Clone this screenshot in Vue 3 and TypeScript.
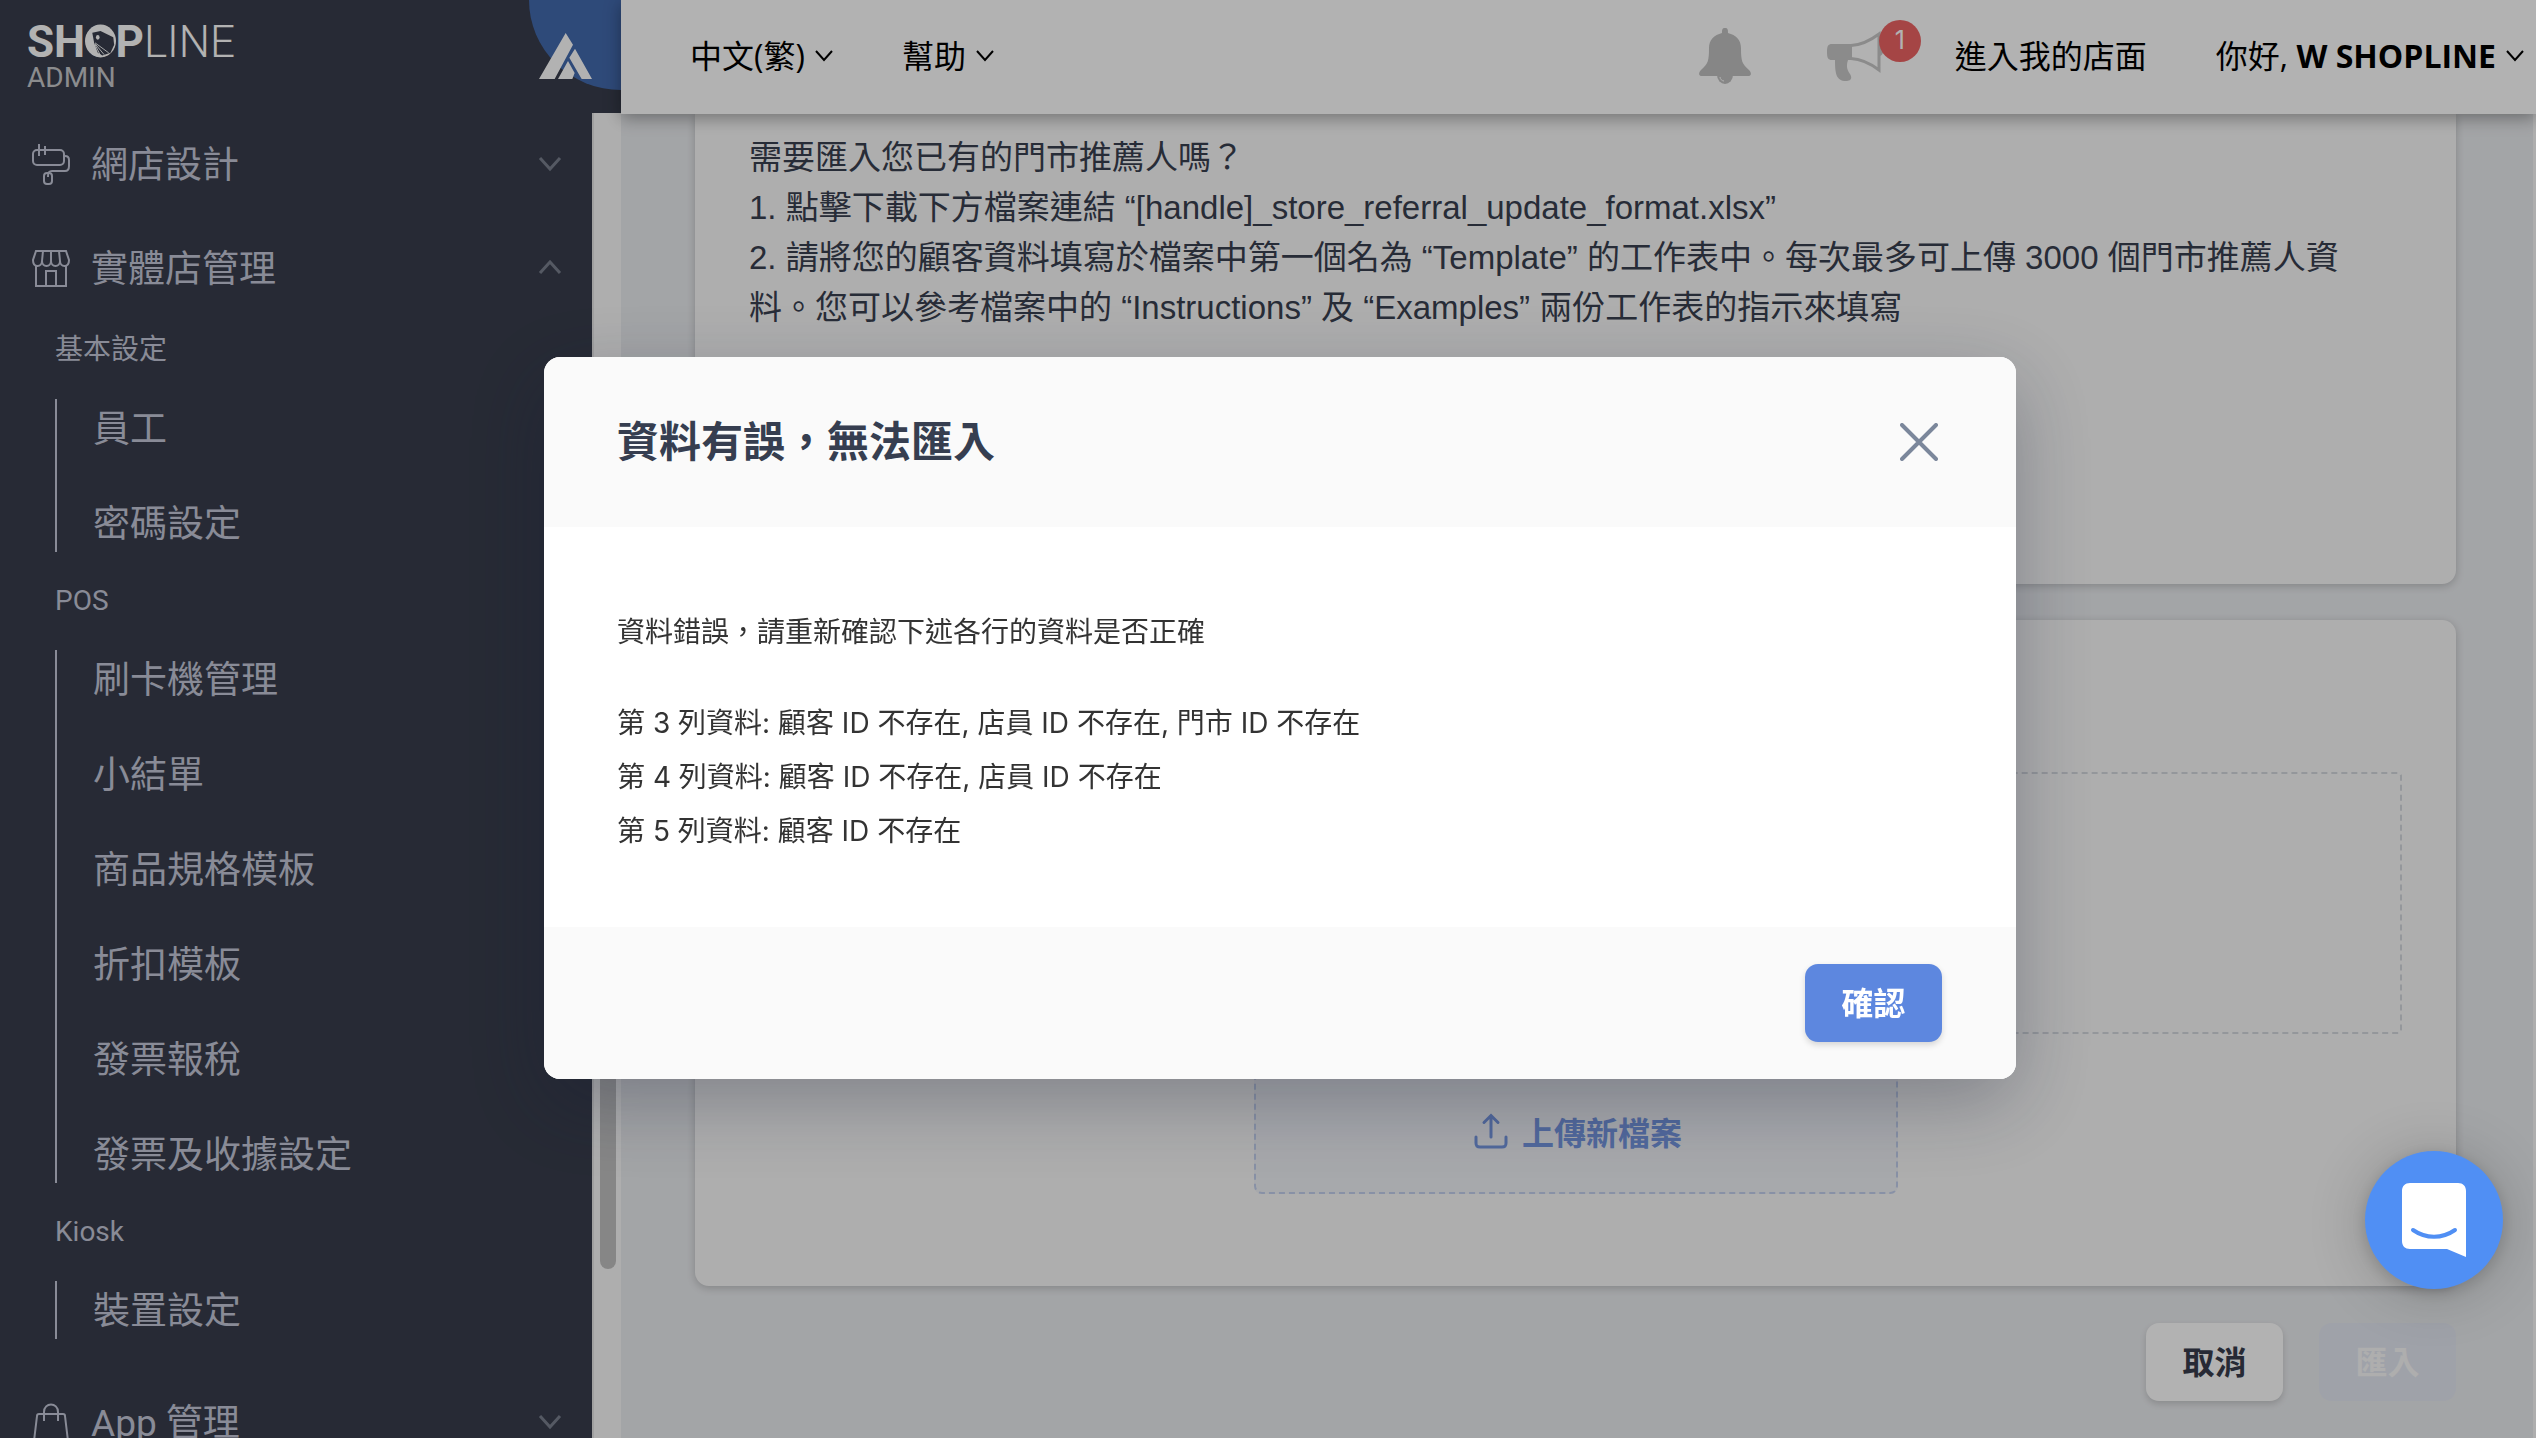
<script setup lang="ts">
import { ref } from 'vue'

interface MenuGroup {
  title: string
  items: string[]
}

const groups: MenuGroup[] = [
  { title: '基本設定', items: ['員工', '密碼設定'] },
  { title: 'POS', items: ['刷卡機管理', '小結單', '商品規格模板', '折扣模板', '發票報稅', '發票及收據設定'] },
  { title: 'Kiosk', items: ['裝置設定'] },
]

const errors: string[] = [
  '第 3 列資料: 顧客 ID 不存在, 店員 ID 不存在, 門市 ID 不存在',
  '第 4 列資料: 顧客 ID 不存在, 店員 ID 不存在',
  '第 5 列資料: 顧客 ID 不存在',
]

const storeOpen = ref(true)
const dialogOpen = ref(true)
</script>

<template>
  <div class="app">
    <aside class="sidebar">
      <div class="brand">
        <a class="logo" href="#">
          <span class="logo-name"><b>SH<span class="logo-o">O<svg viewBox="0 0 34 36" aria-hidden="true">
            <ellipse cx="17" cy="18" rx="17" ry="18" fill="#fff" />
            <path d="M8 9 17 7l14 7 1 8-4 9-9 3-5-3-4-11z" fill="#383d4c" />
            <ellipse cx="14" cy="14" rx="2" ry="2.500" fill="#fff" />
            <path d="M11 20 26 31M11 21l10 12M11 22l6 12" stroke="#fff" fill="none" />
          </svg></span>P</b>LINE</span>
          <span class="logo-sub">ADMIN</span>
        </a>
        <div class="badge">
          <svg viewBox="0 0 159 138" aria-hidden="true">
            <path d="M80 0 102 35 47 138H0zM108 47l51 91h-31L91 74zM87 84l20 36-7 18H57z" fill="#fff" />
          </svg>
        </div>
      </div>
      <div class="sidebar-body">
        <nav class="menu">
          <button class="menu-row" type="button">
            <svg class="menu-icon" viewBox="0 0 40 42" aria-hidden="true">
              <rect x="2" y="7" width="31" height="15" rx="4" />
              <path d="M8 1v12M14 3v9M33 13h1c3 0 4 1 4 4v6c0 3-1 5-4 5H21c-3 0-4 1-4 5v1" />
              <rect x="13" y="30" width="8" height="11" rx="3" />
            </svg>
            <span>網店設計</span>
            <svg class="chev" viewBox="0 0 24 16" aria-hidden="true"><path d="M2 2 12 13 22 2" /></svg>
          </button>
          <button class="menu-row" type="button" :aria-expanded="storeOpen" @click="storeOpen = !storeOpen">
            <svg class="menu-icon" viewBox="0 0 40 42" aria-hidden="true">
              <path d="M5 4h30l3 9c0 4-2 6-4.500 6S29 17 29 14c0 3-2 5-4.500 5S20 17 20 14c0 3-2 5-4.500 5S11 17 11 14c0 3-2 5-4.500 5S2 17 2 13zM12 4l-1 10M20 4v10M28 4l1 10M5 19v20h30V19M15 39V24h10v15" />
            </svg>
            <span>實體店管理</span>
            <svg class="chev" viewBox="0 0 24 16" aria-hidden="true"><path d="M2 13 12 2 22 13" /></svg>
          </button>
          <div v-if="storeOpen" class="submenu">
            <section v-for="g in groups" :key="g.title">
              <h2>{{ g.title }}</h2>
              <ul>
                <li v-for="item in g.items" :key="item"><a href="#">{{ item }}</a></li>
              </ul>
            </section>
          </div>
          <button class="menu-row" type="button">
            <svg class="menu-icon" viewBox="0 0 40 42" aria-hidden="true">
              <path d="M8 13h24c1 0 2 1 2 2l3 25H3L6 15c0-1 1-2 2-2zM13 20v-9c0-10 14-10 14 0v9" />
            </svg>
            <span>App 管理</span>
            <svg class="chev" viewBox="0 0 24 16" aria-hidden="true"><path d="M2 2 12 13 22 2" /></svg>
          </button>
        </nav>
        <div class="track"><div class="thumb"></div></div>
      </div>
    </aside>

    <div class="main">
      <header class="topbar">
        <button class="top-link" type="button">中文(繁)<svg class="caret" viewBox="0 0 18 12" aria-hidden="true"><path d="M1 1 9 10 17 1" /></svg></button>
        <button class="top-link" type="button">幫助<svg class="caret" viewBox="0 0 18 12" aria-hidden="true"><path d="M1 1 9 10 17 1" /></svg></button>
        <button class="icon-btn bell" type="button" aria-label="通知">
          <svg viewBox="0 0 52 56" aria-hidden="true">
            <path d="M26 0c3 0 3 2 3 5 8 2 13 7 13 15 0 13 1 16 8 22 3 3 2 6 0 6H2c-2 0-3-3 0-6 7-6 8-9 8-22 0-8 5-13 13-15 0-3 0-5 3-5z" fill="#c1c1c1" />
            <path d="M18 47a8 9 0 0 0 16 0z" fill="#c1c1c1" />
            <path d="M21 49c0 2 2 4 4 4" stroke="#fff" fill="none" />
          </svg>
        </button>
        <button class="icon-btn horn" type="button" aria-label="公告">
          <svg viewBox="0 0 56 52" aria-hidden="true">
            <path d="M5 14h20v16H5c-4 0-5-2-5-8s1-8 5-8zM8 30h13c-2 6-1 10 2 14 3 5 0 7-4 7-10 0-11-8-11-21zM53 17c4 1 4 8 0 9z" fill="#c8c8c8" />
            <path d="M24 15.500C35 15 44 10 52 4v36C44 34 35 29 24 28.500" fill="none" stroke="#c8c8c8" stroke-width="3" />
          </svg>
          <span class="count">1</span>
        </button>
        <a class="top-link store" href="#">進入我的店面</a>
        <button class="top-link" type="button"><span>你好, <b>W SHOPLINE</b></span><svg class="caret" viewBox="0 0 18 12" aria-hidden="true"><path d="M1 1 9 10 17 1" /></svg></button>
      </header>

      <main class="content">
        <section class="card intro">
          <p>需要匯入您已有的門市推薦人嗎？</p>
          <p>1. 點擊下載下方檔案連結 “[handle]_store_referral_update_format.xlsx”</p>
          <p>2. 請將您的顧客資料填寫於檔案中第一個名為 “Template” 的工作表中。每次最多可上傳 3000 個門市推薦人資料。您可以參考檔案中的 “Instructions” 及 “Examples” 兩份工作表的指示來填寫</p>
        </section>
        <section class="card upload">
          <div class="dropzone"></div>
          <button class="upload-btn" type="button">
            <svg viewBox="0 0 34 36" aria-hidden="true"><path d="M17 24V3M10 9.500 17 2.500 24 9.500M2 24v6c0 3 1 4 4 4h22c3 0 4-1 4-4v-6" /></svg>
            上傳新檔案
          </button>
        </section>
        <div class="actions">
          <button class="btn plain" type="button">取消</button>
          <button class="btn primary" type="button" disabled>匯入</button>
        </div>
      </main>
    </div>

    <div v-if="dialogOpen" class="overlay">
      <div class="dialog" role="dialog" aria-modal="true" aria-labelledby="dialog-title">
        <header class="dialog-head">
          <h1 id="dialog-title">資料有誤，無法匯入</h1>
          <button class="close" type="button" aria-label="關閉" @click="dialogOpen = false">
            <svg viewBox="0 0 38 38" aria-hidden="true"><path d="M2 2 36 36M36 2 2 36" /></svg>
          </button>
        </header>
        <div class="dialog-body">
          <p>資料錯誤，請重新確認下述各行的資料是否正確</p>
          <ul>
            <li v-for="e in errors" :key="e">{{ e }}</li>
          </ul>
        </div>
        <footer class="dialog-foot">
          <button class="btn primary" type="button" @click="dialogOpen = false">確認</button>
        </footer>
      </div>
    </div>

    <button class="chat" type="button" aria-label="聊天">
      <svg viewBox="0 0 64 74" aria-hidden="true">
        <path d="M8 0h48c5 0 8 3 8 8v66l-19-8H8c-5 0-8-3-8-8V8c0-5 3-8 8-8z" fill="#fff" />
        <path d="M11 47c13 9 29 9 42 0" fill="none" stroke="#508ff4" stroke-width="4" stroke-linecap="round" />
      </svg>
    </button>
  </div>
</template>

<style>
body {
  margin: 0;
}
</style>

<style scoped>
.app {
  display: flex;
  height: 100vh;
  overflow: hidden;
  background: #eaecef;
  font-family: Inter, "Noto Sans CJK TC", sans-serif;
  color: #394050;
}

.app * {
  box-sizing: border-box;
}

button {
  font-family: inherit;
  border: 0;
  padding: 0;
  background: none;
  cursor: pointer;
}

a {
  color: inherit;
  text-decoration: none;
}

h1, h2, p, ul {
  margin: 0;
  padding: 0;
  font-weight: 400;
}

ul {
  list-style: none;
}

/* sidebar */
.sidebar {
  flex: none;
  display: flex;
  flex-direction: column;
  width: 621px;
  font-family: Roboto, "Noto Sans CJK TC", sans-serif;
}

.brand {
  flex: none;
  display: flex;
  justify-content: space-between;
  height: 113px;
  background: #383d4c;
}

.logo {
  display: flex;
  flex-direction: column;
  padding: 20px 0 0 27px;
  color: #fff;
}

.logo-name {
  font-size: 44px;
  line-height: 44px;
  font-weight: 300;
}

.logo-name b {
  font-weight: 700;
}

.logo-o {
  position: relative;
}

.logo-o svg {
  position: absolute;
  left: 0;
  top: 8px;
  width: 31px;
  height: 34px;
}

.logo-sub {
  font-size: 28px;
  line-height: 28px;
  font-weight: 400;
  color: #c8c9cc;
}

.badge {
  display: flex;
  align-items: flex-end;
  width: 92px;
  height: 90px;
  padding: 0 0 11px 10px;
  border-bottom-left-radius: 100%;
  background: #436aae;
}

.badge svg {
  width: 53px;
  height: 46px;
}

.sidebar-body {
  flex: 1;
  min-height: 0;
  display: flex;
}

.menu {
  flex: 1;
  overflow: hidden;
  padding-top: 17px;
  background: #383d4c;
  color: #c4c8d8;
}

.menu-row {
  display: flex;
  align-items: center;
  width: 100%;
  height: 67px;
  padding: 0 30px 0 31px;
  font-size: 37px;
  color: inherit;
  text-align: left;
}

.menu-row + .menu-row {
  margin-top: 37px;
}

.menu-row span {
  flex: 1;
  margin-left: 20px;
  padding-bottom: 4px;
}

.menu-icon {
  width: 40px;
  height: 42px;
  fill: none;
  stroke: #c4c8d8;
  stroke-width: 2;
}

.chev {
  width: 24px;
  height: 16px;
  fill: none;
  stroke: #7a808f;
  stroke-width: 3;
}

.submenu {
  padding: 0 0 49px 55px;
}

.submenu h2 {
  font-size: 28px;
  line-height: 98px;
}

.submenu ul {
  display: flex;
  flex-direction: column;
  gap: 37px;
  padding-left: 36px;
  border-left: 2px solid #c4c8d8;
}

.submenu li {
  padding-top: 4px;
  font-size: 37px;
  line-height: 54px;
}

.track {
  position: relative;
  width: 29px;
  background: #fafafa;
  border-left: 2px solid #e6e6e6;
}

.thumb {
  position: absolute;
  right: 5px;
  bottom: 169px;
  width: 16px;
  height: 380px;
  border-radius: 8px;
  background: #c1c1c1;
}

/* main column */
.main {
  flex: 1;
  min-width: 0;
  display: flex;
  flex-direction: column;
  border-right: 3px solid #fafafa;
}

.topbar {
  position: relative;
  z-index: 1;
  flex: none;
  display: flex;
  align-items: center;
  height: 114px;
  margin-right: -3px;
  padding: 0 12px 2px 69px;
  background: #fff;
  box-shadow: 0 4px 16px rgba(0, 0, 0, 0.35);
}

.top-link {
  display: flex;
  align-items: center;
  font-family: "Open Sans", "Noto Sans CJK TC", sans-serif;
  font-size: 32px;
  line-height: 48px;
  color: #000;
  white-space: nowrap;
}

.top-link + .top-link {
  margin-left: 69px;
}

.caret {
  width: 18px;
  height: 12px;
  margin-left: 10px;
  fill: none;
  stroke: #000;
  stroke-width: 2;
}

.icon-btn svg {
  display: block;
}

.bell {
  margin-left: auto;
}

.bell svg {
  width: 52px;
  height: 56px;
}

.horn {
  position: relative;
  margin-left: 76px;
}

.horn svg {
  width: 56px;
  height: 52px;
}

.count {
  position: absolute;
  left: 52px;
  top: -10px;
  width: 42px;
  height: 42px;
  border-radius: 50%;
  background: #ec6464;
  color: #fff;
  font-size: 25px;
  line-height: 40px;
  text-align: center;
}

.store {
  margin-left: 72px;
}

.content {
  flex: 1;
  min-height: 0;
  padding: 0 77px 0 74px;
}

.card {
  border-radius: 14px;
  background: #fafafa;
  box-shadow: 0 2px 8px rgba(0, 0, 0, 0.2);
}

.intro {
  height: 470px;
  padding: 19px 54px;
  border-top-left-radius: 0;
  border-top-right-radius: 0;
  font-family: "Liberation Sans", "Noto Sans CJK TC", sans-serif;
  font-size: 33px;
  line-height: 50px;
}

.upload {
  display: flex;
  flex-direction: column;
  align-items: center;
  margin-top: 36px;
  height: 666px;
  padding: 152px 54px 0;
}

.dropzone {
  width: 100%;
  height: 262px;
  border: 2px dashed #d4d8de;
  border-radius: 4px;
}

.upload-btn {
  display: flex;
  align-items: center;
  justify-content: center;
  gap: 14px;
  width: 644px;
  height: 122px;
  margin-top: 38px;
  padding: 0 0 4px 5px;
  border: 2px dashed #c3d0ee;
  border-radius: 8px;
  background: #f0f2f7;
  font-size: 32px;
  font-weight: 700;
  color: #7596e0;
}

.upload-btn svg {
  width: 34px;
  height: 36px;
  fill: none;
  stroke: #7596e0;
  stroke-width: 3;
  stroke-linecap: round;
}

.actions {
  display: flex;
  justify-content: flex-end;
  gap: 36px;
  padding-top: 37px;
}

.btn {
  width: 137px;
  height: 78px;
  padding-bottom: 4px;
  border-radius: 13px;
  font-size: 32px;
  font-weight: 700;
  box-shadow: 0 3px 6px rgba(0, 0, 0, 0.15);
}

.plain {
  background: #fff;
  color: #383d4c;
}

.primary {
  background: #5d87df;
  color: #fff;
}

.primary:disabled {
  background: #e4e8f3;
  color: #f9f9f9;
  box-shadow: none;
}

/* dialog */
.overlay {
  position: fixed;
  inset: 0;
  z-index: 10;
  display: flex;
  align-items: center;
  justify-content: center;
  padding: 0 0 2px 24px;
  background: rgba(0, 0, 0, 0.3);
}

.dialog {
  width: 1472px;
  max-width: 100%;
  overflow: hidden;
  border-radius: 16px;
  background: #fff;
  box-shadow: 0 24px 80px rgba(20, 25, 50, 0.3);
}

.dialog-head {
  display: flex;
  align-items: center;
  justify-content: space-between;
  height: 170px;
  padding: 0 78px 0 73px;
  background: #fafafa;
}

.dialog-head h1 {
  font-size: 42px;
  line-height: 60px;
  font-weight: 700;
  color: #363e50;
}

.close svg {
  display: block;
  width: 38px;
  height: 38px;
  fill: none;
  stroke: #7b879b;
  stroke-width: 4;
  stroke-linecap: round;
}

.dialog-body {
  padding: 78px 73px 69px;
  font-size: 28px;
  line-height: 54px;
  color: #333;
}

.dialog-body ul {
  margin-top: 37px;
}

.dialog-foot {
  display: flex;
  justify-content: flex-end;
  padding: 37px 74px;
  background: #fafafa;
}

.chat {
  position: fixed;
  right: 33px;
  bottom: 149px;
  z-index: 20;
  display: flex;
  align-items: center;
  justify-content: center;
  width: 138px;
  height: 138px;
  border-radius: 50%;
  background: #508ff4;
  box-shadow: 0 4px 60px rgba(0, 0, 0, 0.2), 0 4px 16px rgba(0, 0, 0, 0.15);
}

.chat svg {
  width: 64px;
  height: 74px;
}
</style>
